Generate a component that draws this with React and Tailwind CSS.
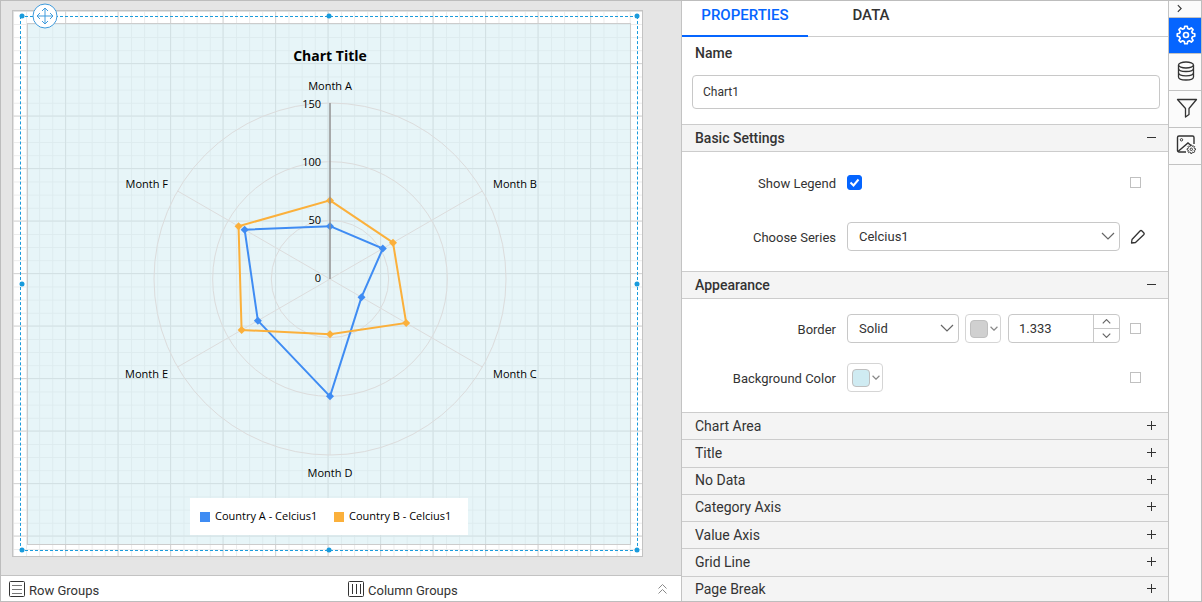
import React, { useState } from "react";

const AXIS_MAX = 150;
const CENTER = { x: 302, y: 255 };
const RADIUS = 176;
const rings = [50, 100, 150];

const months = [
  { name: "Month A", x: 302, y: 66, anchor: "middle" },
  { name: "Month B", x: 465, y: 164, anchor: "start" },
  { name: "Month C", x: 465, y: 354, anchor: "start" },
  { name: "Month D", x: 302, y: 453, anchor: "middle" },
  { name: "Month E", x: 140, y: 354, anchor: "end" },
  { name: "Month F", x: 140, y: 164, anchor: "end" },
];

const series = [
  { name: "Country A - Celcius1", color: "#3f8cf3", values: [45, 52, 31, 100, 71, 84], x: 172 },
  { name: "Country B - Celcius1", color: "#fbb03b", values: [67, 62, 75, 47, 87, 90], x: 306 },
];

const collapsedSections = ["Chart Area", "Title", "No Data", "Category Axis", "Value Axis", "Grid Line", "Page Break"];

const handles = [
  "left-px -top-px",
  "left-1/2 -top-px",
  "left-full -top-px",
  "left-px top-1/2",
  "left-full top-1/2",
  "left-px top-full",
  "left-1/2 top-full",
  "left-full top-full",
];

// Position of a value on the spoke with the given index
const polar = (index, value) => {
  const angle = (index * Math.PI) / 3;
  const r = (value / AXIS_MAX) * RADIUS;
  return { x: CENTER.x + r * Math.sin(angle), y: CENTER.y - r * Math.cos(angle) };
};

// Gear outline with eight rounded teeth on a 24x24 box
const gearPath = () => {
  const points = [];
  for (let i = 0; i < 8; i++) {
    [[-15, 8], [-8, 10.6], [8, 10.6], [15, 8]].forEach(([offset, r]) => {
      const a = ((i * 45 + offset) * Math.PI) / 180;
      points.push(`${(12 + r * Math.sin(a)).toFixed(2)} ${(12 - r * Math.cos(a)).toFixed(2)}`);
    });
  }
  return `M${points.join("L")}Z`;
};

const GearIcon = ({ className, strokeWidth = 2 }) => (
  <svg viewBox="0 0 24 24" className={className} fill="none" stroke="currentColor" strokeWidth={strokeWidth} strokeLinejoin="round">
    <path d={gearPath()} />
    <circle cx="12" cy="12" r="3" />
  </svg>
);

const Chevron = ({ className, up }) => (
  <svg viewBox="0 0 14 8" className={className} fill="none" stroke="currentColor">
    <path d={up ? "M1 7L7 1L13 7" : "M1 1L7 7L13 1"} strokeWidth="1.2" vectorEffect="non-scaling-stroke" />
  </svg>
);

const DatabaseIcon = () => (
  <svg viewBox="0 0 18 20" className="h-5 w-[18px]" fill="none" stroke="currentColor" strokeWidth="1.3">
    <ellipse cx="9" cy="4" rx="7.5" ry="3" />
    <path d="M1.5 4v12c0 1.700 3.400 3 7.500 3s7.500-1.300 7.500-3V4" />
    <path d="M1.5 7.500c0 1.700 3.400 3 7.500 3s7.500-1.300 7.500-3M1.500 11.800c0 1.700 3.400 3 7.500 3s7.500-1.300 7.500-3" />
  </svg>
);

const FilterIcon = () => (
  <svg viewBox="0 0 22 20" className="h-5 w-[22px]" fill="none" stroke="currentColor" strokeWidth="1.3" strokeLinejoin="round">
    <path d="M1.5 1.500h19l-7.500 9v6l-3.500 2.500v-8.500z" />
  </svg>
);

const ImageSettingsIcon = () => (
  <svg viewBox="0 0 20 20" className="h-5 w-5" fill="none" stroke="currentColor" strokeWidth="1.4">
    <path d="M10 18H3a1.500 1.500 0 0 1-1.500-1.500v-13A1.500 1.500 0 0 1 3 2h13.500A1.500 1.500 0 0 1 18 3.500V10" />
    <circle cx="5.5" cy="5.8" r="1.2" strokeWidth="1" />
    <path d="M2 17.500L12 9l3 2.500" />
    <g transform="translate(10.5 10.5) scale(0.4)" strokeWidth="2.4" strokeLinejoin="round">
      <path d={gearPath()} />
      <circle cx="12" cy="12" r="3" />
    </g>
  </svg>
);

const PencilIcon = () => (
  <svg viewBox="0 0 16 16" className="h-4 w-4" fill="none" stroke="currentColor" strokeWidth="1.3" strokeLinejoin="round">
    <path d="M1.500 14l.5-3.500L10 2q1-1 2 0l1.700 1.700q1 1 0 2L5.500 13.500z" />
  </svg>
);

const RadarChart = () => (
  <svg viewBox="0 0 602 520" className="block h-full w-full font-['Open_Sans','Noto_Sans',sans-serif] text-[11px]" role="img" aria-label="Chart Title">
    <text x="302" y="37" textAnchor="middle" className="text-[14px] font-bold">Chart Title</text>

    <g fill="none" stroke="#dcdcdc">
      {rings.map((value) => (
        <circle key={value} cx={CENTER.x} cy={CENTER.y} r={(value / AXIS_MAX) * RADIUS} />
      ))}
      {months.map((month, i) => {
        const end = polar(i, AXIS_MAX);
        return <line key={month.name} x1={CENTER.x} y1={CENTER.y} x2={end.x} y2={end.y} />;
      })}
    </g>

    {series.map((s) => {
      const points = s.values.map((value, i) => polar(i, value));
      return (
        <g key={s.name}>
          <polygon points={points.map((p) => `${p.x},${p.y}`).join(" ")} fill="none" stroke={s.color} strokeWidth="2" />
          {points.map((p, i) => (
            <path key={i} d={`M${p.x - 4} ${p.y}l4 -4l4 4l-4 4z`} fill={s.color} />
          ))}
        </g>
      );
    })}

    <line x1="302" y1="79" x2="302" y2="255" stroke="#8e8e8e" strokeOpacity="0.7" strokeWidth="2" />

    {months.map((month) => (
      <text key={month.name} x={month.x} y={month.y} textAnchor={month.anchor}>{month.name}</text>
    ))}
    {[0, ...rings].map((value) => (
      <text key={value} x="293" y={258 - (value / 50) * 58} textAnchor="end">{value}</text>
    ))}

    {/* Legend */}
    <rect x="162" y="474" width="278" height="37" fill="#fff" />
    {series.map((s) => (
      <g key={s.name}>
        <rect x={s.x} y="488" width="10" height="10" fill={s.color} />
        <text x={s.x + 15} y="496">{s.name}</text>
      </g>
    ))}
  </svg>
);

const PageGrid = () => (
  <svg className="absolute inset-0 h-full w-full">
    <defs>
      <pattern id="minor" x="13" y="13" width="13.125" height="13.125" patternUnits="userSpaceOnUse">
        <path d="M0.5 0V14M0 0.5H14" stroke="#ebebeb" fill="none" />
      </pattern>
      <pattern id="major" x="52" y="52" width="52.5" height="52.5" patternUnits="userSpaceOnUse">
        <path d="M0.5 0V53M0 0.5H53" stroke="#d6d6d6" fill="none" />
      </pattern>
    </defs>
    <rect width="100%" height="100%" fill="url(#minor)" />
    <rect width="100%" height="100%" fill="url(#major)" />
  </svg>
);

const Designer = () => (
  <main className="flex min-w-0 flex-1 flex-col">
    <div className="flex min-h-0 flex-1 bg-[#e5e5e5] pt-[9px] pr-[38px] pb-[18px] pl-[11px]">
      <div className="relative flex-1 border border-[#c3c3c3] bg-white pt-3 pr-[11px] pb-[11px] pl-3.5">
        <PageGrid />
        <div className="relative h-full border border-[#cccccc] bg-[#cfebf2]/50">
          <RadarChart />
        </div>
        <div className="absolute top-[5px] right-1 bottom-[5px] left-[7px] border border-dashed border-[#1a9bdc]">
          {handles.map((place) => (
            <span key={place} className={`absolute h-[5px] w-[5px] -translate-x-1/2 -translate-y-1/2 rounded-full bg-[#1a9bdc] ${place}`} />
          ))}
          <button aria-label="Move" className="absolute -top-3.5 left-[11px] h-[26px] w-[26px]">
            <svg viewBox="0 0 26 26" className="h-full w-full" fill="none" stroke="#3f9bdc">
              <circle cx="13" cy="13" r="12" fill="#fff" />
              <path d="M13 5v16M5 13h16M10 8l3-3l3 3M10 18l3 3l3-3M8 10l-3 3l3 3M18 10l3 3l-3 3" />
            </svg>
          </button>
        </div>
      </div>
    </div>

    <footer className="flex h-[26px] items-center border-t border-[#c3c3c3] bg-white text-[13px] text-[#333333]">
      <div className="flex flex-1 items-center gap-1 pl-2">
        <svg viewBox="0 0 16 16" className="h-4 w-4" fill="none" stroke="#333">
          <rect x="0.5" y="0.5" width="15" height="15" rx="1" />
          <path d="M3 4.500h10M3 8.500h10M3 12.500h10" stroke="#777" />
        </svg>
        <span className="pt-1">Row Groups</span>
      </div>
      <div className="flex flex-1 items-center gap-1 pl-1.5">
        <svg viewBox="0 0 16 16" className="h-4 w-4" fill="none" stroke="#333">
          <rect x="0.5" y="0.5" width="15" height="15" rx="1" />
          <path d="M4.500 3v10M8.500 3v10M12.500 3v10" />
        </svg>
        <span className="flex-1 pt-1">Column Groups</span>
        <button aria-label="Expand groups" className="mr-3.5 text-[#8a8a8a]">
          <svg viewBox="0 0 9 10" className="h-2.5 w-[9px]" fill="none" stroke="currentColor">
            <path d="M0.500 4.500l4-4l4 4M0.500 9.500l4-4l4 4" />
          </svg>
        </button>
      </div>
    </footer>
  </main>
);

const SectionHeader = ({ title }) => (
  <button className="flex h-7 w-full shrink-0 items-center justify-between border-y border-[#cccccc] bg-[#f4f4f4] pr-3 pl-[13px] text-[14px] font-medium">
    {title}
    <span className="mb-0.5 h-px w-[9px] bg-[#333333]" />
  </button>
);

const Field = ({ label, htmlFor, children, action }) => (
  <div className="flex h-[29px] items-center">
    <label htmlFor={htmlFor} className="w-[154px] shrink-0 pt-0.5 text-right">{label}</label>
    <div className="ml-[11px] flex min-w-0 flex-1 items-center">{children}</div>
    <div className="flex w-12 shrink-0 pl-2.5">{action}</div>
  </div>
);

const SelectBox = ({ id, options, className }) => (
  <div className={`relative ${className}`}>
    <select id={id} className="h-[29px] w-full appearance-none rounded border border-[#c8c8c8] bg-white pr-8 pl-[11px]">
      {options.map((option) => (
        <option key={option}>{option}</option>
      ))}
    </select>
    <Chevron className="pointer-events-none absolute top-2.5 right-[5px] h-2 w-3.5 text-[#666666]" />
  </div>
);

const ColorButton = ({ id, label, swatch }) => (
  <button id={id} aria-label={label} className="flex h-[29px] w-9 shrink-0 items-center justify-between rounded border border-[#d5d5d5] bg-white pr-0.5 pl-1">
    <span className={`h-[18px] w-[18px] rounded-sm border border-[#bfbfbf] ${swatch}`} />
    <Chevron className="h-[5px] w-2 text-[#888888]" />
  </button>
);

const ExpressionBox = ({ label }) => (
  <input type="checkbox" aria-label={label} className="h-[11px] w-[11px] appearance-none border border-[#c0c0c0] bg-white" />
);

const Properties = () => {
  const [name, setName] = useState("Chart1");
  const [showLegend, setShowLegend] = useState(true);
  const [borderWidth, setBorderWidth] = useState("1.333");

  const stepWidth = (amount) => setBorderWidth((Number(borderWidth) + amount).toFixed(3));

  return (
    <section className="flex w-[487px] shrink-0 flex-col overflow-hidden border-l border-[#c3c3c3] bg-white text-[13px] text-[#333333]">
      <div className="flex h-9 shrink-0 border-b border-[#cccccc] text-[15px] font-medium" role="tablist">
        <button role="tab" aria-selected="true" className="h-9 w-[126px] border-b-2 border-[#0565ff] pb-1.5 text-[#0565ff]">PROPERTIES</button>
        <button role="tab" aria-selected="false" className="h-9 w-[126px] pb-2">DATA</button>
      </div>

      <div className="shrink-0 pt-1.5 pr-2 pb-[15px] pl-2.5">
        <label htmlFor="name" className="block pl-[3px] text-[14px] leading-5 font-medium">Name</label>
        <input
          id="name"
          value={name}
          onChange={(e) => setName(e.target.value)}
          className="mt-3 block h-[34px] w-full rounded border border-[#c8c8c8] px-2.5 text-[12px]"
        />
      </div>

      <SectionHeader title="Basic Settings" />
      <div className="flex shrink-0 flex-col gap-[25px] pt-4 pb-5">
        <Field label="Show Legend" htmlFor="legend" action={<ExpressionBox label="Show Legend expression" />}>
          <span className="relative h-[15px] w-[15px]">
            <input
              id="legend"
              type="checkbox"
              checked={showLegend}
              onChange={(e) => setShowLegend(e.target.checked)}
              className="block h-[15px] w-[15px] appearance-none rounded-[3px] border border-[#0565ff] checked:bg-[#0565ff]"
            />
            <svg viewBox="0 0 15 15" className="pointer-events-none absolute inset-0" fill="none" stroke="#fff" strokeWidth="2">
              <path d="M3.500 7.500l3 3l5-6" />
            </svg>
          </span>
        </Field>
        <Field
          label="Choose Series"
          htmlFor="series"
          action={<button aria-label="Edit series"><PencilIcon /></button>}
        >
          <SelectBox id="series" options={["Celcius1"]} className="flex-1" />
        </Field>
      </div>

      <SectionHeader title="Appearance" />
      <div className="flex shrink-0 flex-col gap-5 pt-[15px] pb-5">
        <Field label="Border" htmlFor="border" action={<ExpressionBox label="Border expression" />}>
          <SelectBox id="border" options={["Solid", "Dashed", "Dotted"]} className="w-28" />
          <div className="mr-[7px] ml-1.5 flex">
            <ColorButton label="Border color" swatch="bg-[#d0d0d0]" />
          </div>
          <div className="flex h-[29px] min-w-0 flex-1 overflow-hidden rounded border border-[#c8c8c8]">
            <input
              aria-label="Border width"
              value={borderWidth}
              onChange={(e) => setBorderWidth(e.target.value)}
              className="min-w-0 flex-1 pl-2.5"
            />
            <div className="flex w-[26px] flex-col border-l border-[#c8c8c8] text-[#666666]">
              <button aria-label="Increase" onClick={() => stepWidth(1)} className="flex flex-1 items-center justify-center border-b border-[#c8c8c8]">
                <Chevron up className="h-[5px] w-[9px]" />
              </button>
              <button aria-label="Decrease" onClick={() => stepWidth(-1)} className="flex flex-1 items-center justify-center">
                <Chevron className="h-[5px] w-[9px]" />
              </button>
            </div>
          </div>
        </Field>
        <Field label="Background Color" htmlFor="background" action={<ExpressionBox label="Background Color expression" />}>
          <ColorButton id="background" label="Background Color" swatch="bg-[#cfebf2]" />
        </Field>
      </div>

      <div className="flex h-[191px] shrink-0 flex-col text-[14px]">
        {collapsedSections.map((title) => (
          <button key={title} className="flex flex-1 items-center justify-between border-t border-[#cccccc] bg-[#f4f4f4] pr-3 pl-[13px]">
            {title}
            <svg viewBox="0 0 9 9" className="mb-0.5 h-[9px] w-[9px]" stroke="currentColor">
              <path d="M4.500 0v9M0 4.500h9" />
            </svg>
          </button>
        ))}
      </div>
    </section>
  );
};

const Rail = () => (
  <nav className="flex w-[33px] shrink-0 flex-col border-l border-[#c3c3c3] bg-[#fbfbfb] text-[#333333]">
    <button aria-label="Collapse panel" className="flex h-[17px] items-center border-b border-[#c3c3c3] pb-0.5 pl-2">
      <svg viewBox="0 0 6 10" className="h-[9px] w-[5px]" fill="none" stroke="currentColor" strokeWidth="1.3">
        <path d="M1 1l4 4l-4 4" />
      </svg>
    </button>
    <button aria-label="Properties" className="flex h-9 items-center justify-center border-b border-[#c3c3c3] bg-[#0565ff] pb-0.5 pl-0.5 text-white">
      <GearIcon className="h-5 w-5" />
    </button>
    <button aria-label="Data" className="flex h-[37px] items-center justify-center border-b border-[#c3c3c3] pb-0.5 pl-0.5">
      <DatabaseIcon />
    </button>
    <button aria-label="Filter" className="flex h-[37px] items-center justify-center border-b border-[#c3c3c3] pb-0.5 pl-1">
      <FilterIcon />
    </button>
    <button aria-label="Image manager" className="flex h-[37px] items-center justify-center border-b border-[#c3c3c3] pb-1 pl-0.5">
      <ImageSettingsIcon />
    </button>
  </nav>
);

const App = () => {
  return (
    <div className="flex h-screen overflow-hidden border border-[#bdbdbd] bg-white font-['Roboto',sans-serif]">
      <Designer />
      <Properties />
      <Rail />
    </div>
  );
};

export default App;
